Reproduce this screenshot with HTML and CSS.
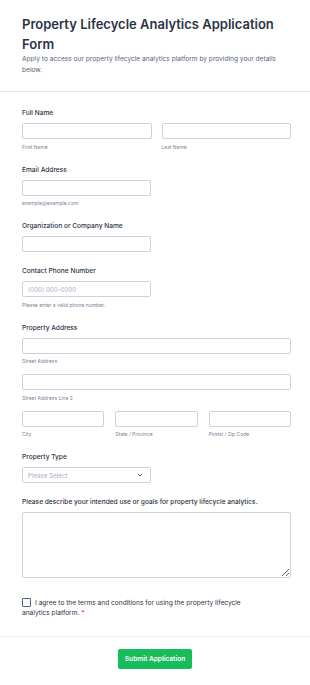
FILE: index.html
```html
<!DOCTYPE html>
<html lang="en">
<head>
  <meta charset="UTF-8">
  <meta name="viewport" content="width=device-width, initial-scale=1.0">
  <title>Property Lifecycle Analytics Application Form</title>
  <link rel="stylesheet" href="styles.css">
</head>
<body>
  <header class="form-header">
    <h1>Property Lifecycle Analytics Application Form</h1>
    <p>Apply to access our property lifecycle analytics platform by providing your details below.</p>
  </header>

  <form class="form-body">
    <div class="field">
      <label class="label">Full Name</label>
      <div class="row two">
        <div>
          <input type="text" class="input">
          <div class="sublabel">First Name</div>
        </div>
        <div>
          <input type="text" class="input">
          <div class="sublabel">Last Name</div>
        </div>
      </div>
    </div>

    <div class="field">
      <label class="label">Email Address</label>
      <input type="email" class="input half">
      <div class="sublabel">example@example.com</div>
    </div>

    <div class="field">
      <label class="label">Organization or Company Name</label>
      <input type="text" class="input half">
    </div>

    <div class="field">
      <label class="label">Contact Phone Number</label>
      <input type="tel" class="input half" placeholder="(000) 000-0000">
      <div class="sublabel">Please enter a valid phone number.</div>
    </div>

    <div class="field">
      <label class="label">Property Address</label>
      <input type="text" class="input">
      <div class="sublabel">Street Address</div>
      <input type="text" class="input next">
      <div class="sublabel">Street Address Line 2</div>
      <div class="row three next">
        <div>
          <input type="text" class="input">
          <div class="sublabel">City</div>
        </div>
        <div>
          <input type="text" class="input">
          <div class="sublabel">State / Province</div>
        </div>
        <div>
          <input type="text" class="input">
          <div class="sublabel">Postal / Zip Code</div>
        </div>
      </div>
    </div>

    <div class="field">
      <label class="label">Property Type</label>
      <div class="select half">
        <span>Please Select</span>
        <svg width="6" height="4" viewBox="0 0 6 4"><path d="M0.8 0.8 L3 3 L5.2 0.8" fill="none" stroke="#57647e" stroke-width="1"/></svg>
      </div>
    </div>

    <div class="field">
      <label class="label">Please describe your intended use or goals for property lifecycle analytics.</label>
      <textarea class="textarea"></textarea>
    </div>

    <div class="agree">
      <span class="checkbox"></span><span class="agree-text required">I agree to the terms and conditions for using the property lifecycle analytics platform.</span>
    </div>
  </form>

  <footer class="form-footer">
    <button class="submit">Submit Application</button>
  </footer>
</body>
</html>
```

FILE: styles.css
```css
body {
  margin: 0;
  font-family: 'Inter', 'Liberation Sans', sans-serif;
  background: #fff;
  color: #2c3345;
}
.form-header {
  padding: 15px 22px 15px;
  border-bottom: 1px solid #e6e8ee;
}
.form-header h1 {
  margin: 0;
  font-size: 13px;
  line-height: 19.5px;
  font-weight: 600;
  color: #2c3345;
}
.form-header p {
  margin: 0;
  font-size: 6.6px;
  line-height: 11px;
  color: #57647e;
}
.form-body {
  padding: 16px 19px 18px 22px;
  border-bottom: 1px solid #f0f1f4;
}
.field {
  margin-bottom: 14px;
}
.label {
  display: block;
  font-size: 6.6px;
  line-height: 10px;
  font-weight: 500;
  margin-bottom: 5px;
}
.input {
  display: block;
  box-sizing: border-box;
  width: 100%;
  height: 16px;
  border: 1px solid #cdd2dd;
  border-radius: 2px;
  padding: 0 5px;
  font-family: inherit;
  font-size: 6.2px;
  color: #2c3345;
  outline: none;
}
.input::placeholder {
  color: #a9afc0;
}
.half {
  width: 129px;
}
.next {
  margin-top: 9px;
}
.sublabel {
  margin-top: 4.5px;
  font-size: 5px;
  line-height: 7px;
  color: #7d8497;
}
.row {
  display: grid;
  gap: 10px;
}
.row.two {
  grid-template-columns: 1fr 1fr;
}
.row.three {
  grid-template-columns: 1fr 1fr 1fr;
  gap: 11px;
}
.select {
  box-sizing: border-box;
  height: 16px;
  border: 1px solid #cdd2dd;
  border-radius: 2px;
  display: flex;
  align-items: center;
  justify-content: space-between;
  padding: 0 7px 0 5px;
  font-size: 6.2px;
  color: #a9afc0;
}
.textarea {
  display: block;
  box-sizing: border-box;
  width: 100%;
  height: 66px;
  border: 1px solid #cdd2dd;
  border-radius: 2px;
  font-family: inherit;
  outline: none;
}
.agree {
  margin-top: 20px;
  padding-right: 40px;
  font-size: 6.6px;
  line-height: 9.5px;
  color: #2c3345;
}
.checkbox {
  display: inline-block;
  box-sizing: border-box;
  width: 9px;
  height: 9px;
  border: 1px solid #57647e;
  border-radius: 1px;
  vertical-align: -2px;
  margin-right: 4px;
}
.required::after {
  content: " *";
  color: #f23a3c;
}
.form-footer {
  display: flex;
  justify-content: center;
  padding: 12px 0 17px;
}
.submit {
  background: #18bd5b;
  color: #fff;
  border: none;
  border-radius: 2px;
  height: 20px;
  padding: 0 7px;
  font-family: inherit;
  font-size: 6.6px;
  font-weight: 600;
}
```
